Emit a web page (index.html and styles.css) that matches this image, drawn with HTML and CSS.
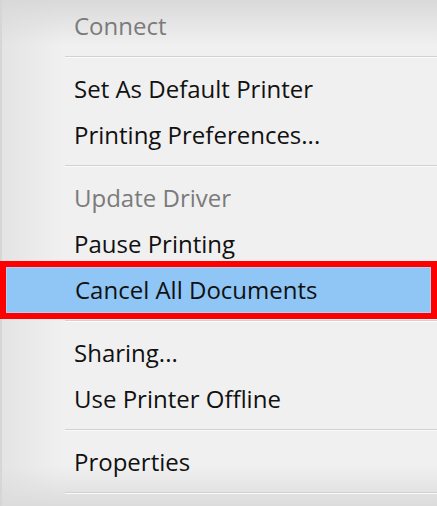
FILE: index.html
```html
<!DOCTYPE html>
<html lang="en">
<head>
    <meta charset="UTF-8">
    <title>Printer context menu</title>
    <link rel="stylesheet" href="styles.css">
</head>
<body>
    <div class="menu">
        <div class="item disabled">Connect</div>
        <div class="sep"></div>
        <div class="item">Set As Default Printer</div>
        <div class="item">Printing Preferences...</div>
        <div class="sep"></div>
        <div class="item disabled">Update Driver</div>
        <div class="item">Pause Printing</div>
        <div class="item selected">Cancel All Documents</div>
        <div class="sep"></div>
        <div class="item">Sharing...</div>
        <div class="item">Use Printer Offline</div>
        <div class="sep"></div>
        <div class="item">Properties</div>
        <div class="sep"></div>
    </div>
</body>
</html>
```

FILE: styles.css
```css
* {
    box-sizing: border-box;
    margin: 0;
    padding: 0;
}

body {
    width: 437px;
    height: 506px;
    overflow: hidden;
    background: #efefef;
    font-family: "Open Sans", "Noto Sans", sans-serif;
}

.menu {
    height: 506px;
    padding-top: 3px;
    border-left: 2px solid #d6d6d6;
    background:
        linear-gradient(to bottom, #d9d9d9 0, rgba(239,239,239,0) 45px),
        linear-gradient(to top, #dcdcdc 0, rgba(239,239,239,0) 40px),
        linear-gradient(to right, #e4e4e4 0, rgba(239,239,239,0) 60px),
        #f0f0f0;
}

.item {
    height: 46px;
    line-height: 46px;
    padding-left: 72px;
    font-size: 24px;
    color: #111;
    white-space: nowrap;
}

.item.disabled {
    color: #7b7b7b;
}

.item.selected {
    margin: 0 6px 0 4px;
    padding-left: 68px;
    background: #8fc6f6;
    border: 1px solid #a9d2f4;
    line-height: 44px;
    outline: 6px solid #ff0000;
}

.sep {
    height: 2px;
    margin: 7px 0 8px 63px;
    background: #d2d2d2;
    border-bottom: 1px solid #fafafa;
}
```
